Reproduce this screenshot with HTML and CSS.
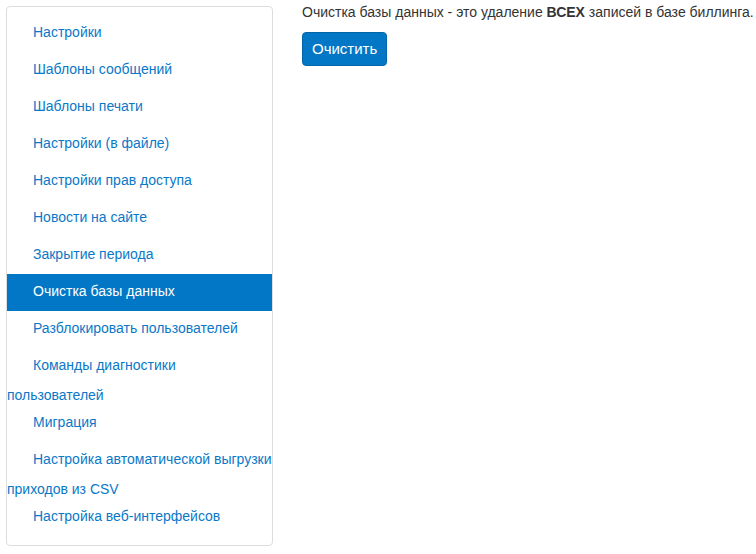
FILE: index.html
```html
<!DOCTYPE html>
<html lang="ru">

<head>
  <meta charset="UTF-8">
  <meta name="viewport" content="width=device-width, initial-scale=1.0">

  <title>Очистка базы данных</title>
  <link rel="stylesheet" href="styles.css">
</head>

<body>
<div class="page">
  <div class="side-menu">
    <ul class="menu-list">
      <li><a href="#">Настройки</a></li>
      <li><a href="#">Шаблоны сообщений</a></li>
      <li><a href="#">Шаблоны печати</a></li>
      <li><a href="#">Настройки (в файле)</a></li>
      <li><a href="#">Настройки прав доступа</a></li>
      <li><a href="#">Новости на сайте</a></li>
      <li><a href="#">Закрытие периода</a></li>
      <li class="active"><a href="#">Очистка базы данных</a></li>
      <li><a href="#">Разблокировать пользователей</a></li>
      <li><a href="#">Команды диагностики пользователей</a></li>
      <li><a href="#">Миграция</a></li>
      <li><a href="#">Настройка автоматической выгрузки приходов из CSV</a></li>
      <li><a href="#">Настройка веб-интерфейсов</a></li>
    </ul>
  </div>

  <div class="content">
    <p>Очистка базы данных - это удаление <b>ВСЕХ</b> записей в базе биллинга.</p>
    <button class="btn-primary">Очистить</button>
  </div>
</div>
</body>

</html>
```

FILE: styles.css
```css
body {
  font-family: "Liberation Sans", Arial, sans-serif;
  font-size: 14px;
  line-height: 20px;
  color: #333;
  margin: 0;
  padding: 0;
  background-color: #fff;
}

:root {
  --color-link: #0a78c8;
  --color-active: #0277c6;
  --color-border: #ddd;
}

.page {
  display: flex;
  align-items: flex-start;
  padding: 2px 0 0 6px;
}

.side-menu {
  width: 267px;
  flex-shrink: 0;
  margin-top: 4px;
  border: 1px solid var(--color-border);
  border-radius: 4px;
  box-sizing: border-box;
}

.menu-list {
  list-style: none;
  margin: 0;
  padding: 8px 0 9px;
}

.menu-list li {
  line-height: 20px;
}

/* spacer makes the first line taller and indents it */
.menu-list li::before {
  content: "";
  display: inline-block;
  width: 26px;
  height: 37px;
  vertical-align: middle;
}

.menu-list a {
  color: var(--color-link);
  text-decoration: none;
}

.menu-list li.active {
  background-color: var(--color-active);
}

.menu-list li.active a {
  color: #fff;
}

.content {
  margin-left: 29px;
}

.content p {
  margin: 0 0 10px;
  white-space: nowrap;
}

.btn-primary {
  font-family: inherit;
  font-size: 15px;
  line-height: 20px;
  padding: 6px 9px;
  color: #fff;
  background-color: var(--color-active);
  border: 1px solid #0266a8;
  border-radius: 4px;
  cursor: pointer;
}
```
